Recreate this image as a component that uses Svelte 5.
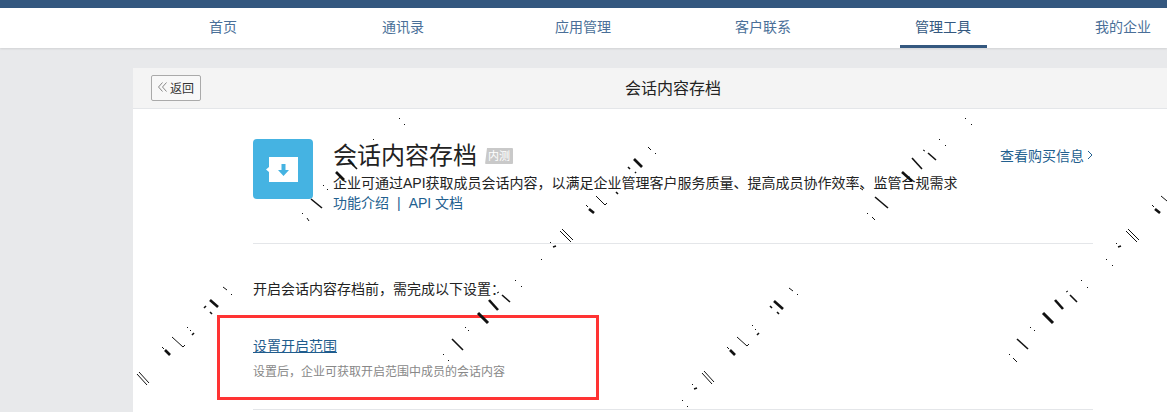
<script>
  const navItems = [
    { label: '首页' },
    { label: '通讯录' },
    { label: '应用管理' },
    { label: '客户联系' },
    { label: '管理工具', active: true },
    { label: '我的企业' }
  ];

  // stray bits of the diagonal watermark: x1 y1 x2 y2 width
  const thin = 1;
  const mid = 1.6;
  const thick = 2.6;
  const marks = [
    // first band
    [399, 118, 400, 119, thin], [404, 124, 405, 125, thin], [373, 139, 374, 140, thin],
    [348, 160, 357, 169, mid], [336, 172, 344, 180, thick], [323, 185, 324, 186, thin], [327, 189, 328, 190, thin],
    [311, 199, 322, 208, mid], [302, 213, 303, 214, thin], [307, 218, 309, 221, thin],
    // second band
    [648, 147, 651, 150, thin], [655, 153, 656, 154, thin], [634, 159, 642, 167, thick], [628, 167, 630, 169, mid],
    [635, 172, 636, 173, mid], [616, 192, 618, 194, mid], [596, 196, 605, 205, thin], [605, 205, 607, 203, thin],
    [586, 205, 588, 207, thin], [589, 209, 594, 213, thick], [560, 231, 571, 242, thin], [562, 229, 573, 240, thin],
    [550, 242, 551, 243, thin], [553, 247, 556, 246, mid], [541, 259, 542, 260, thin],
    // third band
    [789, 288, 793, 291, thin], [797, 294, 798, 295, thin], [774, 301, 783, 309, thick], [770, 306, 772, 308, mid],
    [777, 312, 779, 314, mid], [752, 325, 753, 326, thin], [755, 329, 756, 330, thin], [757, 335, 759, 333, mid],
    [737, 337, 747, 346, thin], [747, 346, 749, 344, thin], [727, 347, 729, 349, thin], [730, 350, 735, 355, thick],
    [702, 373, 712, 384, thin], [704, 371, 714, 382, thin], [692, 384, 693, 385, thin], [694, 389, 697, 388, mid],
    [682, 400, 683, 401, thin], [687, 406, 688, 407, thin],
    // fourth band
    [965, 118, 966, 119, thin], [971, 124, 972, 125, thin], [939, 139, 940, 140, thin], [945, 145, 946, 146, thin],
    [923, 150, 925, 151, thin], [928, 153, 936, 160, mid], [912, 158, 922, 169, mid], [902, 172, 912, 181, thick],
    [860, 188, 863, 190, thin], [875, 197, 888, 208, mid], [867, 213, 868, 214, thin], [872, 217, 875, 220, thin],
    // fifth band
    [1161, 196, 1167, 201, thin], [1152, 205, 1154, 207, thin], [1155, 209, 1160, 213, thick],
    [1126, 231, 1137, 242, thin], [1128, 229, 1139, 240, thin], [1116, 243, 1117, 244, thin], [1118, 247, 1121, 246, mid],
    [1106, 259, 1107, 260, thin], [1112, 265, 1113, 266, thin], [1081, 280, 1082, 281, thin], [1087, 287, 1088, 288, thin],
    [1066, 292, 1068, 291, thin], [1070, 295, 1077, 302, mid], [1055, 300, 1063, 309, thick],
    [1043, 313, 1053, 323, 3], [1030, 327, 1031, 328, thin], [1034, 330, 1035, 331, thin],
    [1017, 339, 1028, 349, mid], [1009, 354, 1010, 355, thin], [1013, 358, 1017, 362, thin],
    // bottom left band
    [223, 287, 227, 290, thin], [231, 294, 232, 295, thin], [210, 300, 218, 307, thick], [204, 308, 206, 306, mid],
    [210, 312, 212, 314, mid], [187, 327, 188, 328, thin], [190, 330, 191, 331, thin], [192, 335, 194, 333, mid],
    [172, 337, 183, 347, thin], [183, 347, 185, 345, thin], [162, 347, 164, 349, thin], [165, 350, 170, 355, thick],
    [137, 374, 147, 385, thin], [139, 372, 149, 383, thin],
    // bottom middle band
    [515, 280, 516, 281, thin], [521, 286, 522, 287, thin], [497, 293, 499, 292, thin], [502, 295, 510, 302, mid],
    [489, 300, 498, 310, thick], [478, 313, 488, 323, 3], [465, 327, 466, 328, thin], [468, 330, 469, 331, thin],
    [452, 339, 463, 350, mid], [443, 354, 444, 355, thin], [448, 360, 449, 361, thin]
  ];
</script>

<div class="page">
  <div class="topbar"></div>
  <nav class="nav">
    {#each navItems as item}
      <a class="nav-item" class:active={item.active} href="#top">{item.label}</a>
    {/each}
  </nav>

  <div class="card">
    <div class="card-head">
      <button class="back">
        <svg width="9" height="10" viewBox="0 0 9 10"><path d="M4.500 0.500L0.500 5l4 4.500M8.500 0.500L4.500 5l4 4.500" fill="none" stroke="#888" /></svg>
        返回
      </button>
      <div class="card-title">会话内容存档</div>
    </div>

    <div class="card-body">
      <div class="intro">
        <div class="app-icon">
          <svg class="glyph" width="29" height="25" viewBox="0 0 29 25">
            <path d="M0 0h29v25H0v-10l-3-2.500 3-2.500z" fill="#fff" />
            <path d="M12.500 7h4v6h3.500l-5.500 6-5.500-6h3.500z" fill="#45b3e2" />
          </svg>
        </div>
        <div class="intro-text">
          <h1>会话内容存档<span class="tag">内测</span></h1>
          <p>企业可通过API获取成员会话内容，以满足企业管理客户服务质量、提高成员协作效率、监管合规需求</p>
          <div class="links"><a href="#top">功能介绍</a><span class="sep">|</span><a href="#top">API 文档</a></div>
        </div>
        <a class="buy" href="#top">查看购买信息<svg width="6" height="10" viewBox="0 0 6 10"><path d="M1 1l4 4-4 4" fill="none" stroke="#22608f" /></svg></a>
      </div>

      <p class="need">开启会话内容存档前，需完成以下设置：</p>

      <div class="setting">
        <a class="setting-link" href="#top">设置开启范围</a>
        <p class="setting-desc">设置后，企业可获取开启范围中成员的会话内容</p>
      </div>
    </div>
  </div>

  <div class="highlight"></div>
  <svg class="marks" width="1167" height="412">
    {#each marks as m}
      <line x1={m[0]} y1={m[1]} x2={m[2]} y2={m[3]} stroke="#111" stroke-width={m[4]} />
    {/each}
  </svg>
</div>

<style>
  :global(body) {
    margin: 0;
    background: #e8e9eb;
    overflow: hidden;
  }
  .page {
    position: relative;
    width: 1167px;
    height: 412px;
    overflow: hidden;
    font-family: "Liberation Sans", "Noto Sans CJK SC", sans-serif;
    font-size: 14px;
    color: #222;
  }
  a {
    text-decoration: none;
    color: #22608f;
  }
  .topbar {
    height: 8px;
    background: #34587f;
  }
  .nav {
    height: 40px;
    background: #fff;
    box-shadow: 0 1px 2px rgba(0, 0, 0, 0.1);
    display: flex;
    padding-left: 133px;
  }
  .nav-item {
    width: 180px;
    flex: none;
    text-align: center;
    line-height: 39px;
    font-size: 14px;
    color: #4a6f98;
    box-sizing: border-box;
  }
  .nav-item.active {
    color: #34587f;
    background: linear-gradient(#34587f, #34587f) center bottom / 87px 3px no-repeat;
  }
  .card {
    margin: 20px 0 0 133px;
    width: 1100px;
    background: #fff;
    border-radius: 3px 3px 0 0;
    height: 400px;
  }
  .card-head {
    position: relative;
    height: 41px;
    background: #f4f4f4;
    border-bottom: 1px solid #e4e6e9;
    box-sizing: border-box;
    display: flex;
    align-items: center;
    padding-left: 18px;
  }
  .back {
    height: 26px;
    width: 50px;
    padding: 0 0 2px;
    background: #f8f8f8;
    border: 1px solid #aaa;
    border-radius: 2px;
    font: inherit;
    font-size: 12px;
    color: #333;
    display: flex;
    align-items: center;
    justify-content: center;
    gap: 3px;
  }
  .card-title {
    position: absolute;
    left: 0;
    width: 1080px;
    padding-bottom: 3px;
    text-align: center;
    font-size: 16px;
    color: #222;
  }
  .card-body {
    width: 840px;
    padding: 30px 0 0 120px;
  }
  .intro {
    display: flex;
    align-items: flex-start;
    padding-bottom: 30px;
    border-bottom: 1px solid #e4e6e9;
    position: relative;
    height: 74px;
  }
  .app-icon {
    width: 60px;
    height: 60px;
    border-radius: 4px;
    background: #45b3e2;
    display: flex;
    align-items: center;
    justify-content: center;
    flex: none;
    margin-right: 20px;
  }
  .glyph {
    overflow: visible;
  }
  .intro-text {
    flex: 1;
    min-width: 0;
  }
  h1 {
    margin: 0;
    font-weight: normal;
    font-size: 24px;
    line-height: 34px;
    color: #222;
    display: flex;
    align-items: center;
  }
  .tag {
    margin-left: 8px;
    font-size: 11px;
    line-height: 16px;
    padding: 0 3px;
    color: #fff;
    background: #c9c9c9;
    border-radius: 1px;
    clip-path: polygon(2px 0, 100% 0, 100% 100%, 0 100%);
  }
  .intro-text p {
    margin: 0;
    line-height: 20px;
    font-size: 14px;
    white-space: nowrap;
    color: #222;
  }
  .links {
    font-size: 14px;
    line-height: 20px;
  }
  .sep {
    margin: 0 8px;
    color: #22608f;
  }
  .buy {
    position: absolute;
    right: 0;
    top: 6px;
    font-size: 14px;
    display: flex;
    align-items: center;
    gap: 3px;
  }
  .need {
    margin: 36px 0 0;
    font-size: 14px;
    line-height: 18px;
  }
  .setting {
    margin-top: 37px;
    padding-bottom: 30px;
    border-bottom: 1px solid #e4e6e9;
  }
  .setting-link {
    font-size: 14px;
    text-decoration: underline;
    color: #1f5c8d;
  }
  .setting-desc {
    margin: 7px 0 0;
    font-size: 12px;
    color: #888;
  }
  .highlight {
    position: absolute;
    left: 217px;
    top: 315px;
    width: 382px;
    height: 85px;
    border: 3px solid #f33;
    box-sizing: border-box;
  }
  .marks {
    position: absolute;
    left: 0;
    top: 0;
  }
</style>
